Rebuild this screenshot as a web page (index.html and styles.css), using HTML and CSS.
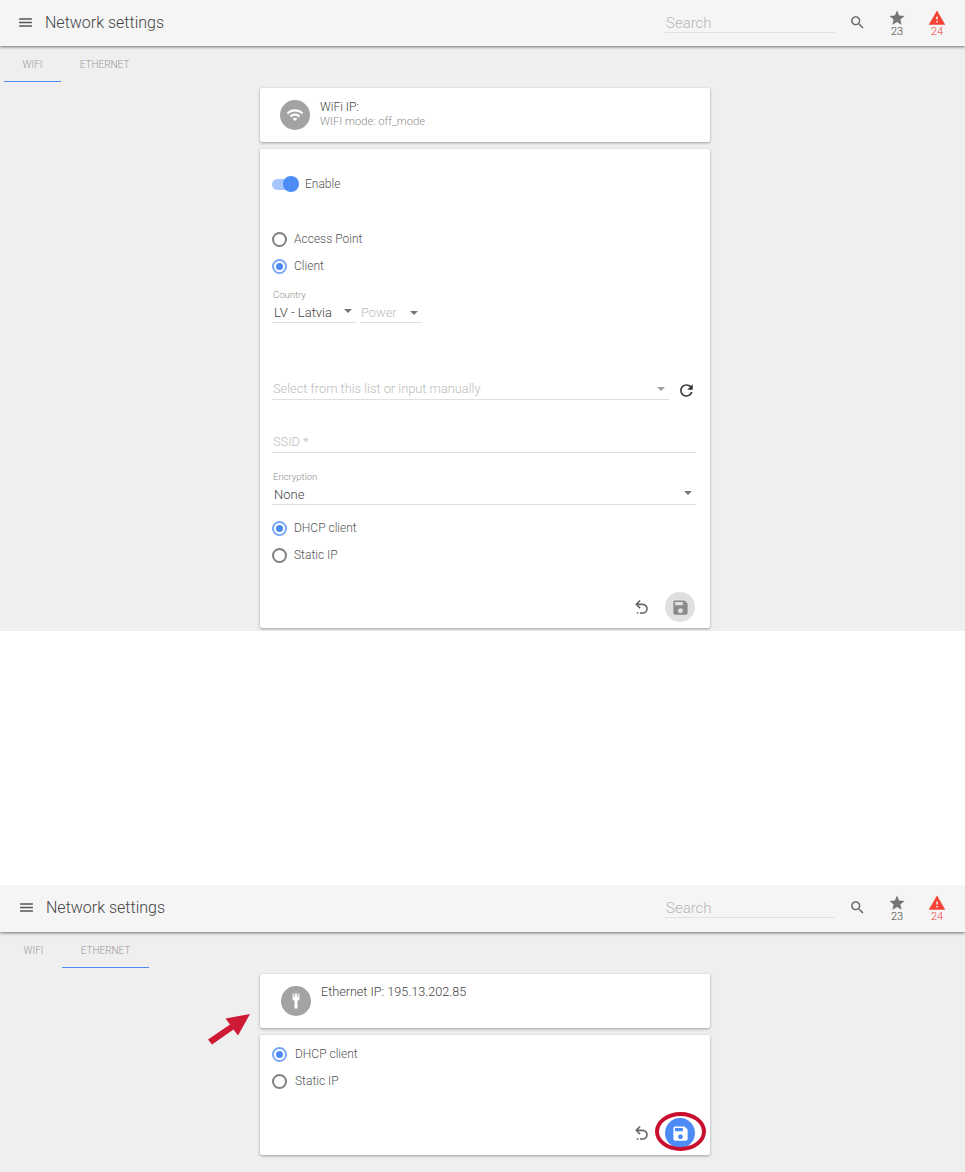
FILE: index.html
```html
<!DOCTYPE html>
<html lang="en">
<head>
    <meta charset="UTF-8">
    <meta name="viewport" content="width=device-width, initial-scale=1.0">
    <title>Network settings</title>
    <link rel="stylesheet" href="styles.css">
</head>
<body>

    <!-- Icon sprite -->
    <svg class="sprite">
        <symbol id="i-menu" viewBox="0 0 24 24"><path d="M3 18h18v-2H3v2zm0-5h18v-2H3v2zm0-7v2h18V6H3z"/></symbol>
        <symbol id="i-search" viewBox="0 0 24 24"><path d="M15.5 14h-.79l-.28-.27C15.41 12.59 16 11.11 16 9.5 16 5.91 13.09 3 9.5 3S3 5.91 3 9.5 5.91 16 9.5 16c1.61 0 3.09-.59 4.23-1.57l.27.28v.79l5 4.99L20.49 19l-4.99-5zm-6 0C7.01 14 5 11.99 5 9.5S7.01 5 9.5 5 14 7.01 14 9.5 11.99 14 9.5 14z"/></symbol>
        <symbol id="i-star" viewBox="0 0 24 24"><path d="M12 17.27L18.18 21l-1.64-7.03L22 9.24l-7.19-.61L12 2 9.19 8.63 2 9.24l5.46 4.73L5.82 21z"/></symbol>
        <symbol id="i-warning" viewBox="0 0 24 24"><path d="M1 21h22L12 2 1 21zm12-3h-2v-2h2v2zm0-4h-2v-4h2v4z"/></symbol>
        <symbol id="i-wifi" viewBox="0 0 24 24"><path d="M1 9l2 2c4.97-4.97 13.03-4.97 18 0l2-2C16.93 2.93 7.08 2.93 1 9zm8 8l3 3 3-3c-1.65-1.66-4.34-1.66-6 0zm-4-4l2 2c2.76-2.76 7.24-2.76 10 0l2-2C15.14 9.14 8.87 9.14 5 13z"/></symbol>
        <symbol id="i-plug" viewBox="0 0 24 24"><path d="M7.5 2H9v4h1.5V2h3v4H15V2h1.5v8L14 12v10h-4V12l-2.5-2z"/></symbol>
        <symbol id="i-refresh" viewBox="0 0 24 24"><path d="M17.65 6.35C16.2 4.9 14.21 4 12 4c-4.42 0-7.99 3.58-7.99 8s3.57 8 7.99 8c3.73 0 6.84-2.55 7.73-6h-2.08c-.82 2.33-3.04 4-5.65 4-3.31 0-6-2.69-6-6s2.69-6 6-6c1.66 0 3.14.69 4.22 1.78L13 11h7V4l-2.35 2.35z"/></symbol>
        <symbol id="i-undo" viewBox="0 0 24 24"><path d="M13.5,7A6.5,6.5 0 0,1 20,13.5A6.5,6.5 0 0,1 13.5,20H10V18H13.5C16,18 18,16 18,13.5C18,11 16,9 13.5,9H7.83L10.91,12.09L9.5,13.5L4,8L9.5,2.5L10.92,3.91L7.83,7H13.5M6,18H8V20H6V18Z"/></symbol>
        <symbol id="i-save" viewBox="0 0 24 24"><path d="M17 3H5c-1.11 0-2 .9-2 2v14c0 1.1.89 2 2 2h14c1.1 0 2-.9 2-2V7l-4-4zm-5 16c-1.66 0-3-1.34-3-3s1.34-3 3-3 3 1.34 3 3-1.34 3-3 3zm3-10H5V5h10v4z"/></symbol>
    </svg>

    <!-- WiFi tab -->
    <section class="screen screen-wifi">
        <header class="topbar">
            <svg class="icon menu-icon"><use href="#i-menu"/></svg>
            <div class="title">Network settings</div>
            <div class="search">Search</div>
            <svg class="icon search-icon"><use href="#i-search"/></svg>
            <div class="counter"><svg class="icon"><use href="#i-star"/></svg><span>23</span></div>
            <div class="counter counter-alert"><svg class="icon"><use href="#i-warning"/></svg><span>24</span></div>
        </header>
        <nav class="tabs">
            <div class="tab tab-wifi active">WIFI</div>
            <div class="tab tab-eth">ETHERNET</div>
        </nav>
        <div class="cards">
            <div class="card info-card">
                <div class="avatar"><svg class="icon"><use href="#i-wifi"/></svg></div>
                <div class="info-text">
                    <div class="info-title">WiFi IP:</div>
                    <div class="info-sub">WIFI mode: off_mode</div>
                </div>
            </div>
            <div class="card form-card wifi-form">
                <div class="toggle-row">
                    <div class="toggle"><div class="toggle-thumb"></div></div>
                    <span>Enable</span>
                </div>
                <div class="radio-group mode-group">
                    <div class="radio-row"><div class="radio"></div>Access Point</div>
                    <div class="radio-row"><div class="radio checked"></div>Client</div>
                </div>
                <div class="select-pair">
                    <div class="field country-field">
                        <label>Country</label>
                        <div class="select-value">LV - Latvia<i class="caret"></i></div>
                    </div>
                    <div class="field power-field">
                        <div class="select-value muted">Power<i class="caret"></i></div>
                    </div>
                </div>
                <div class="list-row">
                    <div class="field list-field">
                        <div class="select-value muted">Select from this list or input manually<i class="caret caret-light"></i></div>
                    </div>
                    <svg class="icon refresh-icon"><use href="#i-refresh"/></svg>
                </div>
                <div class="field ssid-field">
                    <div class="select-value muted">SSID *</div>
                </div>
                <div class="field enc-field">
                    <label>Encryption</label>
                    <div class="select-value">None<i class="caret"></i></div>
                </div>
                <div class="radio-group ip-group">
                    <div class="radio-row"><div class="radio checked"></div>DHCP client</div>
                    <div class="radio-row"><div class="radio"></div>Static IP</div>
                </div>
                <div class="actions wifi-actions">
                    <svg class="icon undo-icon"><use href="#i-undo"/></svg>
                    <div class="save-btn"><svg class="icon"><use href="#i-save"/></svg></div>
                </div>
            </div>
        </div>
    </section>

    <!-- Ethernet tab -->
    <section class="screen screen-eth">
        <header class="topbar">
            <svg class="icon menu-icon"><use href="#i-menu"/></svg>
            <div class="title">Network settings</div>
            <div class="search">Search</div>
            <svg class="icon search-icon"><use href="#i-search"/></svg>
            <div class="counter"><svg class="icon"><use href="#i-star"/></svg><span>23</span></div>
            <div class="counter counter-alert"><svg class="icon"><use href="#i-warning"/></svg><span>24</span></div>
        </header>
        <nav class="tabs">
            <div class="tab tab-wifi">WIFI</div>
            <div class="tab tab-eth active">ETHERNET</div>
        </nav>
        <div class="cards">
            <div class="card info-card eth-info">
                <div class="avatar"><svg class="icon"><use href="#i-plug"/></svg></div>
                <div class="info-title">Ethernet IP: 195.13.202.85</div>
            </div>
            <div class="card form-card eth-form">
                <div class="radio-group">
                    <div class="radio-row"><div class="radio checked"></div>DHCP client</div>
                    <div class="radio-row"><div class="radio"></div>Static IP</div>
                </div>
                <div class="actions eth-actions">
                    <svg class="icon undo-icon"><use href="#i-undo"/></svg>
                    <div class="save-btn save-active"><svg class="icon"><use href="#i-save"/></svg></div>
                </div>
            </div>
        </div>

        <!-- Annotations drawn over the screenshot -->
        <svg class="arrow-mark" viewBox="0 0 44 32"><path d="M1 26.5L23 11.5 18.5 5.5 43 1 31 22.5 26.5 16.5 5 31.5z"/></svg>
        <div class="ring-mark"></div>
    </section>

</body>
</html>
```

FILE: styles.css
```css
* {
    box-sizing: border-box;
}

body {
    margin: 0;
    background: #fff;
    font-family: 'Roboto', sans-serif;
    font-weight: 300;
    color: #555;
    font-size: 12px;
}

.sprite {
    display: none;
}

.icon {
    display: block;
    width: 24px;
    height: 24px;
    fill: currentColor;
}

/* Screens */
.screen {
    position: relative;
    background: #efefef;
    overflow: hidden;
}

.screen-wifi {
    height: 631px;
}

.screen-eth {
    height: 287px;
    margin-top: 254px;
}

/* Top bar */
.topbar {
    position: relative;
    display: flex;
    align-items: center;
    height: 46px;
    padding-left: 17px;
    padding-bottom: 2px;
    background: #f5f5f5;
    box-shadow: 0 1px 3px rgba(0, 0, 0, 0.55);
}

.screen-eth .topbar {
    height: 47px;
    padding-bottom: 3px;
    padding-left: 18px;
}

.menu-icon {
    width: 17px;
    height: 17px;
    color: #555;
}

.title {
    margin-left: 11px;
    font-size: 16px;
    color: #444;
}

.search {
    align-self: flex-start;
    width: 170px;
    height: 22px;
    margin-top: 11px;
    margin-left: auto;
    padding-left: 1px;
    padding-top: 3px;
    font-size: 15px;
    line-height: 18px;
    color: #b5b5b5;
    border-bottom: 1px solid #e2e2e2;
}

.search-icon {
    width: 17px;
    height: 17px;
    margin-left: 14px;
    color: #666;
}

.counter {
    display: flex;
    flex-direction: column;
    align-items: center;
    width: 24px;
    margin-left: 19px;
    color: #757575;
}

.counter .icon {
    width: 18px;
    height: 18px;
    margin-top: 2px;
}

.counter span {
    font-size: 11px;
    line-height: 10px;
    color: #444;
}

.counter-alert {
    margin-left: 16px;
    margin-right: 16px;
    color: #f44336;
}

.counter-alert span {
    color: #f44336;
}

/* Tabs */
.tabs {
    display: flex;
    height: 36px;
    padding-left: 4px;
}

.tab {
    padding-top: 13px;
    font-size: 10px;
    line-height: 12px;
    text-align: center;
    color: #9a9a9a;
}

.tab-wifi {
    width: 57px;
}

.tab-eth {
    width: 87px;
}

.tab.active {
    border-bottom: 1px solid #4c8bf5;
}

.screen-eth .tabs {
    padding-left: 5px;
}

/* Cards */
.cards {
    display: flex;
    flex-direction: column;
    gap: 7px;
    width: 450px;
    margin: 6px 0 0 260px;
}

.card {
    background: #fff;
    border-radius: 2px;
    box-shadow: 0 1px 3px rgba(0, 0, 0, 0.35);
}

.info-card {
    display: flex;
    align-items: center;
    gap: 10px;
    height: 54px;
    padding-left: 20px;
}

.avatar {
    display: flex;
    align-items: center;
    justify-content: center;
    width: 30px;
    height: 30px;
    border-radius: 50%;
    background: #a3a3a3;
    color: #fff;
}

.avatar .icon {
    width: 18px;
    height: 18px;
}

.info-text {
    margin-top: -2px;
}

.info-title {
    font-size: 12px;
    line-height: 14px;
    color: #444;
}

.info-sub {
    margin-top: 1px;
    font-size: 11.2px;
    line-height: 13px;
    color: #8c8c8c;
}

.eth-info {
    align-items: flex-start;
    padding-top: 12px;
    padding-left: 21px;
}

.eth-info .info-title {
    margin-top: -1px;
    font-size: 12.6px;
}

/* Form card */
.form-card {
    padding: 0 14px 0 12px;
}

.wifi-form {
    height: 479px;
    padding-top: 26px;
}

.eth-form {
    height: 120px;
    padding-top: 9px;
}

.toggle-row {
    display: flex;
    align-items: center;
    height: 18px;
    color: #555;
}

.toggle {
    position: relative;
    width: 24px;
    height: 11px;
    margin-right: 9px;
    border-radius: 6px;
    background: #a6c5fa;
}

.toggle-thumb {
    position: absolute;
    top: -2.5px;
    right: -3px;
    width: 16px;
    height: 16px;
    border-radius: 50%;
    background: #4c8bf5;
}

.radio-group {
    display: flex;
    flex-direction: column;
    gap: 7px;
}

.mode-group {
    margin-top: 36px;
}

.ip-group {
    margin-top: 13px;
}

.radio-row {
    display: flex;
    align-items: center;
    gap: 7px;
    height: 20px;
    color: #555;
}

.eth-form .radio-row {
    gap: 8px;
}

.radio {
    display: flex;
    align-items: center;
    justify-content: center;
    width: 15px;
    height: 15px;
    border: 2px solid #808080;
    border-radius: 50%;
}

.radio.checked {
    border-color: #7aa8f8;
}

.radio.checked::after {
    content: "";
    width: 7px;
    height: 7px;
    border-radius: 50%;
    background: #4c8bf5;
}

/* Fields */
.field {
    position: relative;
}

.field label {
    display: block;
    margin-bottom: 2px;
    padding-left: 1px;
    font-size: 9.5px;
    line-height: 11px;
    color: #8c8c8c;
}

.select-value {
    position: relative;
    display: flex;
    align-items: center;
    padding-left: 2px;
    height: 20px;
    font-size: 13px;
    color: #444;
    border-bottom: 1px solid #e0e0e0;
}

.field label + .select-value {
    height: 21px;
}

.select-value.muted {
    padding-left: 1px;
    padding-bottom: 2px;
    color: #bdbdbd;
    font-size: 12.8px;
}

.caret {
    position: absolute;
    right: 4px;
    top: 7px;
    border-left: 4px solid transparent;
    border-right: 4px solid transparent;
    border-top: 4px solid #757575;
}

.caret-light {
    border-top-color: #9e9e9e;
}

.select-pair {
    display: flex;
    align-items: flex-end;
    gap: 4px;
    margin-top: 13px;
}

.country-field {
    width: 84px;
}

.power-field {
    width: 62px;
}

.power-field .select-value {
    height: 19px;
}

.list-row {
    display: flex;
    align-items: flex-end;
    margin-top: 57px;
}

.list-field {
    width: 399px;
}

.refresh-icon {
    width: 19px;
    height: 19px;
    margin-left: 8px;
    color: #333;
}

.ssid-field {
    margin-top: 33px;
}

.enc-field {
    margin-top: 18px;
}

/* Card actions */
.actions {
    display: flex;
    align-items: center;
    justify-content: flex-end;
    gap: 14px;
    margin-right: 1px;
}

.wifi-actions,
.eth-actions {
    margin-top: 27px;
}

.undo-icon {
    width: 19px;
    height: 19px;
    color: #666;
}

.save-btn {
    display: flex;
    align-items: center;
    justify-content: center;
    width: 30px;
    height: 30px;
    border-radius: 50%;
    background: #e0e0e0;
    color: #8a8a8a;
}

.save-btn .icon {
    width: 19px;
    height: 19px;
}

.save-active {
    background: #4c8bf5;
    color: #fff;
}

/* Annotations */
.arrow-mark {
    position: absolute;
    left: 207px;
    top: 128px;
    width: 44px;
    height: 32px;
    fill: #cf1a36;
}

.ring-mark {
    position: absolute;
    left: 655px;
    top: 227px;
    width: 51px;
    height: 39px;
    border: 4px solid #c8102e;
    border-radius: 50%;
}
```
